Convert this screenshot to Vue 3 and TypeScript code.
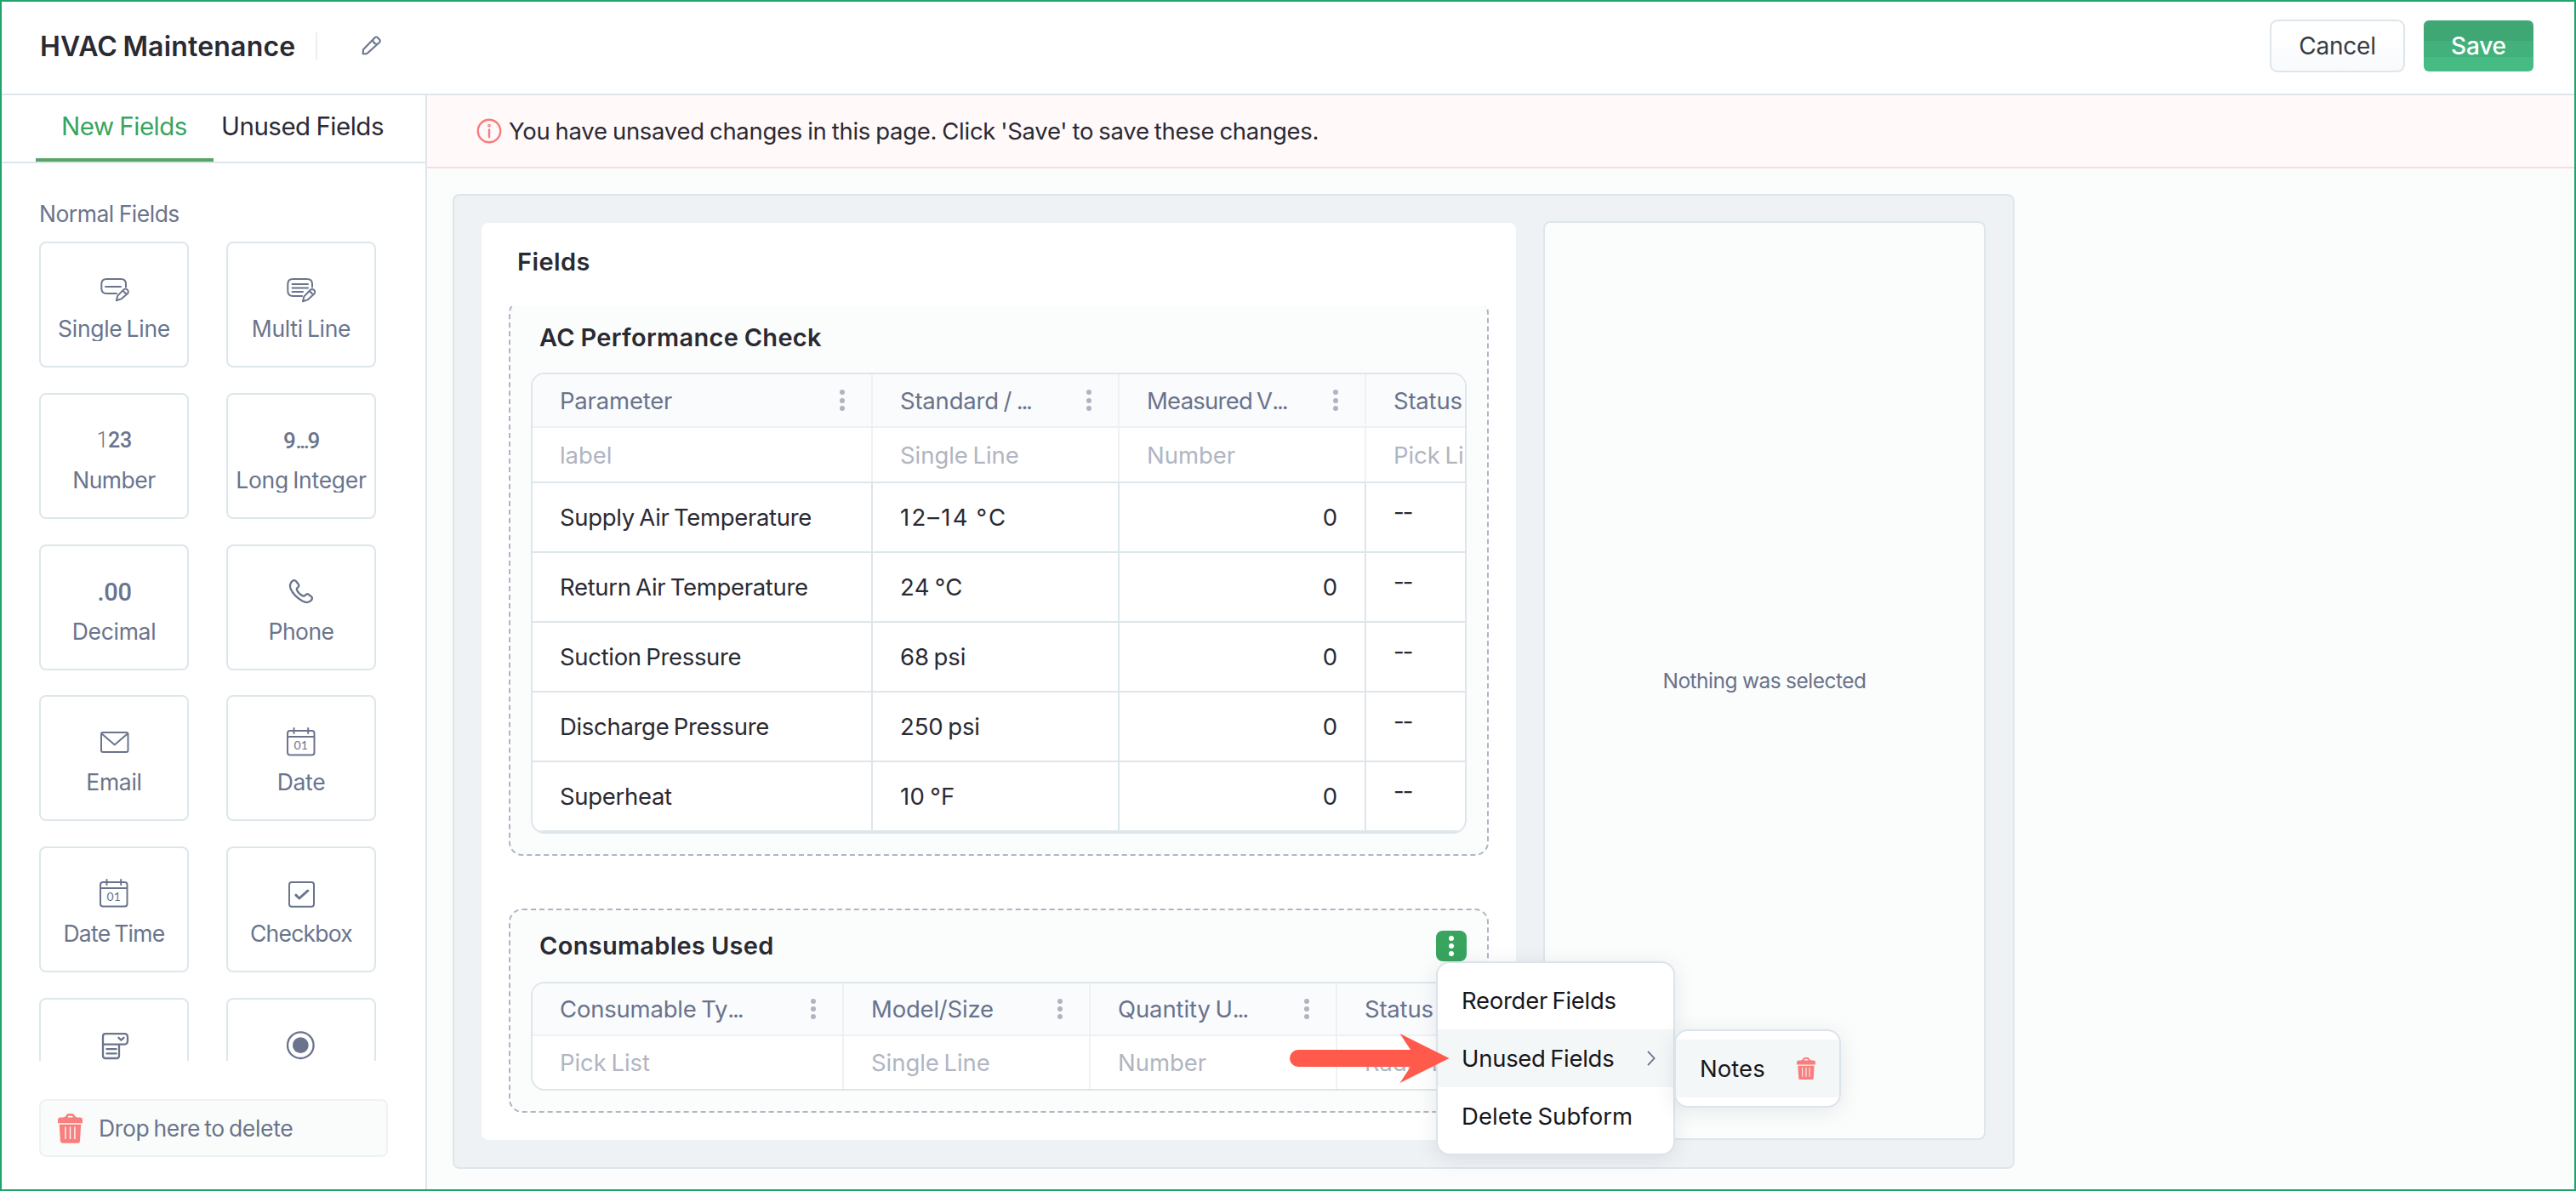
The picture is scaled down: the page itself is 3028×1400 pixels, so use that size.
<script setup lang="ts">
interface FieldType {
  label: string
  icon: string
  tracking?: number
}
interface Column {
  title: string
  cut?: boolean
  type: string
  width: number
  tracking?: number
}

const fieldTypes: FieldType[] = [
  { label: 'Single Line', icon: 'single' },
  { label: 'Multi Line', icon: 'multi' },
  { label: 'Number', icon: 'number', tracking: -0.5 },
  { label: 'Long Integer', icon: 'long', tracking: -0.25 },
  { label: 'Decimal', icon: 'decimal' },
  { label: 'Phone', icon: 'phone', tracking: -0.5 },
  { label: 'Email', icon: 'email' },
  { label: 'Date', icon: 'date' },
  { label: 'Date Time', icon: 'date', tracking: -0.7 },
  { label: 'Checkbox', icon: 'checkbox', tracking: -0.75 },
  { label: 'Pick List', icon: 'picklist' },
  { label: 'Radio Button', icon: 'radio' },
]

const performanceColumns: Column[] = [
  { title: 'Parameter', type: 'label', width: 400 },
  { title: 'Standard / ', cut: true, type: 'Single Line', width: 290 },
  { title: 'Measured V', cut: true, type: 'Number', width: 290, tracking: -0.75 },
  { title: 'Status', type: 'Pick List', width: 290 },
]
const performanceRows = [
  { name: 'Supply Air Temperature', standard: '12–14 °C', tracking: 2.2 },
  { name: 'Return Air Temperature', standard: '24 °C', tracking: 0.3 },
  { name: 'Suction Pressure', standard: '68 psi', tracking: -0.1 },
  { name: 'Discharge Pressure', standard: '250 psi', tracking: -0.1 },
  { name: 'Superheat', standard: '10 °F', tracking: 0.3 },
]
const consumableColumns: Column[] = [
  { title: 'Consumable Ty', cut: true, type: 'Pick List', width: 366 },
  { title: 'Model/Size', type: 'Single Line', width: 290 },
  { title: 'Quantity U', cut: true, type: 'Number', width: 290, tracking: -0.1 },
  { title: 'Status', type: 'Radio Button', width: 290 },
]
</script>

<template>
  <div class="app">
    <header class="topbar">
      <h1>HVAC Maintenance</h1>
      <span class="divider"></span>
      <svg class="edit" viewBox="0 0 26 26" width="26" height="26">
        <path d="M2.6 22.2 L3 17.2 L16.6 3.2 a2.3 2.3 0 0 1 3.3 0 l2.2 2.2 a2.3 2.3 0 0 1 0 3.3 L8.2 21.2 q-.8.8-2 .9Z M14.2 5.8 q.4 4.4 5.2 5.2" />
      </svg>
      <div class="actions">
        <button class="btn cancel">Cancel</button>
        <button class="btn save">Save</button>
      </div>
    </header>

    <div class="body">
      <aside class="sidebar">
        <nav class="tabs">
          <a class="tab active">New Fields</a>
          <a class="tab">Unused Fields</a>
        </nav>
        <div class="palette">
          <div class="palette-title">Normal Fields</div>
          <div class="cards">
            <div v-for="f in fieldTypes" :key="f.label" class="card">
              <svg class="icon" viewBox="0 0 40 40" width="40" height="40">
                <g v-if="f.icon === 'single'">
                  <path d="M34 17.5V14q0-6-6-6H11.3q-6 0-6 6v5q0 6 6 6H23M10 17H28" />
                  <path d="M22.9 33.3L24.2 27.6L31.2 20.6a3.2 3.2 0 0 1 4.6 4.6L28.4 31.4ZM30.4 21.6l4 4.2" />
                </g>
                <g v-else-if="f.icon === 'multi'">
                  <path d="M33 17.5V14q0-6-6-6H10.3q-6 0-6 6v8q0 6 6 6H21M9.5 14H28M9.5 18.5H28M9.5 23H22" />
                  <path d="M22 34.3L23.3 28.6L30.6 21a3.2 3.2 0 0 1 4.6 4.6L27.6 32.4ZM29.8 22l4 4.2" />
                </g>
                <text v-else-if="f.icon === 'number'" x="-0.5" y="27.7" class="digits"><tspan class="thin">1</tspan>23</text>
                <text v-else-if="f.icon === 'long'" x="-1" y="29.4" class="digits tight">9<tspan class="ell">...</tspan>9</text>
                <text v-else-if="f.icon === 'decimal'" x="0.5" y="29.8" class="digits dec">.00</text>
                <path
                  v-else-if="f.icon === 'phone'"
                  d="M9.5 7.2C11 5.6 12.8 5.8 14 7.2L16.8 10.8C17.8 12.2 17.4 13.6 16.2 14.4C14.8 15.4 14.4 16.4 15 17.8C16.4 20.6 19 23.2 21.8 24.4C23.2 25 24 24.8 25 23.6C26.2 22 27.6 22 28.8 22.8L31.8 25.2C33.2 26.4 33.2 28 32 29.6C29.2 33 25.6 32.8 21 30.2C14.6 26.4 10 21.6 7.6 16C6.2 12.4 7 9.6 9.5 7.2Z"
                  class="bold"
                />
                <path v-else-if="f.icon === 'email'" d="M7 8H34.5q2 0 2 2V29q0 2-2 2H7q-2 0-2-2V10q0-2 2-2ZM5.6 9.4L20.7 22.5L35.8 9.4" />
                <g v-else-if="f.icon === 'date'">
                  <path d="M7 6H32.5q3 0 3 3V31.5q0 3-3 3H7q-3 0-3-3V9q0-3 3-3ZM4 13H35.5M11.5 3V9M28.2 3V9" />
                  <text x="11.6" y="27.8" class="day">01</text>
                </g>
                <g v-else-if="f.icon === 'checkbox'">
                  <path d="M9 6H32q3 0 3 3V31.8q0 3-3 3H9q-3 0-3-3V9q0-3 3-3Z" />
                  <path d="M13.8 21.2L17.8 25L27.8 16" class="heavy" />
                </g>
                <g v-else-if="f.icon === 'picklist'">
                  <path d="M10 6.2H32q4 0 4 4v4.4q0 4-4 4H7M7 18.6V9.2q0-3 3-3M7 18.6V32q0 3 3 3H23q3 0 3-3V18.8M11.4 24.2H22.6M11.4 29.4H22.6" class="bold" />
                  <path d="M25.4 10.8L28.4 13.6L31.4 10.8" class="bold" />
                </g>
                <g v-else>
                  <circle cx="19.3" cy="19.7" r="15.3" class="bold" />
                  <circle cx="19.3" cy="19.7" r="9.4" class="solid" />
                </g>
              </svg>
              <span class="card-label" :style="{ letterSpacing: (f.tracking ?? -0.3) + 'px' }">{{ f.label }}</span>
            </div>
          </div>
        </div>
        <div class="dropzone">
          <svg class="trash" viewBox="0 0 29 35" width="29" height="35">
            <path d="M0 11.2V7.6q0-3 3-3H6q2.5 0 3.3-1.8 .8-2.8 3-2.8H17q2 0 3 2.8 .8 1.8 3 1.8h3q3 0 3 3v3.6ZM12 4.6H17.5V2.8H12Z" />
            <path d="M1.7 12.8H27.2L26 32.4q-.2 2.4-2.6 2.4H5.6q-2.4 0-2.6-2.4ZM8.2 15.6V30H9.6V15.6ZM13.8 15.6V30H15.2V15.6ZM19.2 15.6V30H20.6V15.6Z" />
          </svg>
          <span>Drop here to delete</span>
        </div>
      </aside>

      <main class="main">
        <div class="notice">
          <svg viewBox="0 0 30 30" width="30" height="30">
            <circle cx="15" cy="15" r="13.2" />
            <path d="M15 13.4V22" />
            <circle cx="15" cy="8.6" r="0.7" />
          </svg>
          <span>You have unsaved changes in this page. Click 'Save' to save these changes.</span>
        </div>

        <div class="canvas">
          <section class="panel">
            <h2>Fields</h2>
            <div class="scroller">
              <div class="subform">
                <div class="subform-head"><h3>AC Performance Check</h3></div>
                <div class="grid ruled">
                  <div class="row head">
                    <div v-for="c in performanceColumns" :key="c.title" class="cell" :style="{ width: c.width + 'px' }">
                      <span :style="{ letterSpacing: (c.tracking ?? -0.2) + 'px' }">{{ c.title }}<i v-if="c.cut" class="ellipsis">...</i></span>
                      <span v-if="c.title !== 'Status'" class="dots"><b></b><b></b><b></b></span>
                    </div>
                  </div>
                  <div class="row kinds">
                    <div v-for="c in performanceColumns" :key="c.title" class="cell" :style="{ width: c.width + 'px' }">{{ c.type }}</div>
                  </div>
                  <div v-for="r in performanceRows" :key="r.name" class="row data">
                    <div class="cell first">{{ r.name }}</div>
                    <div class="cell" :style="{ letterSpacing: r.tracking + 'px' }">{{ r.standard }}</div>
                    <div class="cell amount">0</div>
                    <div class="cell blank">--</div>
                  </div>
                </div>
              </div>
            </div>

            <div class="subform second">
              <div class="subform-head">
                <h3 class="wide">Consumables Used</h3>
                <div class="menu-anchor">
                  <button class="more"><b></b><b></b><b></b></button>
                  <div class="menu">
                    <div class="menu-item">Reorder Fields</div>
                    <div class="menu-item current">
                      Unused Fields
                      <svg viewBox="0 0 12 20" width="12" height="20"><path d="M2 1.8L9.6 10L2 18.2" /></svg>
                    </div>
                    <div class="menu-item plain">Delete Subform</div>
                    <div class="submenu">
                      <div class="menu-item current plain">
                        Notes
                        <svg class="trash" viewBox="0 0 29 35" width="22" height="26.5">
                          <path d="M0 11.2V7.6q0-3 3-3H6q2.5 0 3.3-1.8 .8-2.8 3-2.8H17q2 0 3 2.8 .8 1.8 3 1.8h3q3 0 3 3v3.6ZM12 4.6H17.5V2.8H12Z" />
                          <path d="M1.7 12.8H27.2L26 32.4q-.2 2.4-2.6 2.4H5.6q-2.4 0-2.6-2.4ZM8.2 15.6V30H9.6V15.6ZM13.8 15.6V30H15.2V15.6ZM19.2 15.6V30H20.6V15.6Z" />
                        </svg>
                      </div>
                    </div>
                    <svg class="arrow" viewBox="0 0 188 58" width="188" height="58">
                      <path d="M10 19H142L129.5 0L187.5 29L129.5 58L142 39H10A10 10 0 0 1 10 19Z" />
                    </svg>
                  </div>
                </div>
              </div>
              <div class="grid">
                <div class="row head">
                  <div v-for="c in consumableColumns" :key="c.title" class="cell" :style="{ width: c.width + 'px' }">
                    <span :style="{ letterSpacing: (c.tracking ?? -0.2) + 'px' }">{{ c.title }}<i v-if="c.cut" class="ellipsis">...</i></span>
                    <span v-if="c.title !== 'Status'" class="dots"><b></b><b></b><b></b></span>
                  </div>
                </div>
                <div class="row kinds">
                  <div v-for="c in consumableColumns" :key="c.title" class="cell" :style="{ width: c.width + 'px' }">{{ c.type }}</div>
                </div>
              </div>
            </div>
          </section>
          <section class="inspector">Nothing was selected</section>
        </div>
      </main>
    </div>
  </div>
</template>

<style>
body {
  margin: 0;
}
</style>

<style scoped>
* {
  box-sizing: border-box;
}
.app {
  display: flex;
  flex-direction: column;
  width: 3028px;
  height: 1400px;
  border: 2px solid #20a46c;
  background: #fff;
  color: #2a2a33;
  font-family: Inter, 'Liberation Sans', sans-serif;
  font-size: 27.5px;
  letter-spacing: -0.2px;
  word-spacing: -2px;
  overflow: hidden;
}
h1,
h2,
h3 {
  margin: 0;
  font-weight: 600;
}
.topbar {
  display: flex;
  align-items: center;
  flex: none;
  height: 110px;
  padding: 0 48px 4px 45px;
  border-bottom: 2px solid #dee6eb;
}
h1 {
  width: 324px;
  font-size: 32px;
  letter-spacing: 0.2px;
  white-space: nowrap;
}
.divider {
  width: 2px;
  height: 32px;
  background: #eaeff3;
}
.edit {
  margin-left: 51px;
  fill: none;
  stroke: #6b7590;
  stroke-width: 2.1;
  stroke-linejoin: round;
}
.actions {
  display: flex;
  align-items: center;
  gap: 22px;
  margin-left: auto;
}
.btn {
  padding: 0;
  border: 0;
  font: 400 28px Inter, 'Liberation Sans', sans-serif;
  border-radius: 6px;
}
.cancel {
  width: 159px;
  height: 62px;
  border: 2px solid #dee6eb;
  border-radius: 9px;
  background: linear-gradient(#fff 25%, #f8fafc);
  color: #3a3a42;
  letter-spacing: -0.2px;
}
.save {
  width: 129px;
  height: 60px;
  background: linear-gradient(#3fa774 24px, #43b17b 24px 43px, #46bb83 43px);
  color: #fff;
  font-weight: 500;
  letter-spacing: -0.2px;
}
.body {
  display: flex;
  flex: 1;
  min-height: 0;
}
.sidebar {
  display: flex;
  flex-direction: column;
  flex: none;
  width: 500px;
  border-right: 2px solid #dee6eb;
}
.tabs {
  display: flex;
  flex: none;
  height: 80px;
  padding-left: 40px;
  border-bottom: 2px solid #dee6eb;
  word-spacing: -1px;
}
.tab {
  padding: 0 9px 0 9px;
  height: 78px;
  line-height: 72px;
  font-size: 29.5px;
  letter-spacing: -0.5px;
  white-space: nowrap;
}
.tab.active {
  width: 209px;
  padding: 0 0 0 30px;
  border-bottom: 4px solid #57a566;
  color: #38a45e;
}
.palette {
  flex: none;
  height: 1055px;
  padding: 40px 0 0 44px;
  overflow: hidden;
}
.palette-title {
  height: 52px;
  line-height: 39px;
  font-size: 26.5px;
  letter-spacing: -0.5px;
  word-spacing: -1px;
  color: #6a748c;
}
.cards {
  display: grid;
  grid-template-columns: 176px 176px;
  column-gap: 44px;
  row-gap: 29.8px;
}
.card {
  display: flex;
  flex-direction: column;
  align-items: center;
  height: 148px;
  padding-top: 34px;
  border: 2px solid #dde7eb;
  border-radius: 8px;
  color: #6a748c;
  font-size: 26.5px;
}
.icon {
  display: block;
  flex: none;
  margin-bottom: 12px;
  fill: none;
  stroke: #6a748c;
  stroke-width: 2;
  stroke-linejoin: round;
  stroke-linecap: round;
  overflow: visible;
}
.icon .bold {
  stroke-width: 2.3;
}
.icon .heavy {
  stroke-width: 3;
}
.icon .solid,
.icon text {
  fill: #6a748c;
  stroke: none;
}
.icon text {
  word-spacing: 0;
}
.digits {
  font-size: 25px;
  font-weight: 500;
  font-family: Roboto, sans-serif;
  letter-spacing: -0.3px;
}
.digits .thin {
  font-weight: 300;
}
.digits.tight {
  letter-spacing: -0.4px;
  font-size: 26px;
}
.digits .ell {
  letter-spacing: -2.5px;
}
.digits.dec {
  font-size: 29px;
  font-weight: 500;
}
.day {
  font-family: Lato, sans-serif;
  font-weight: 400;
  font-size: 14px;
  letter-spacing: 0;
}
.card-label {
  height: 29px;
  line-height: 29px;
  overflow: hidden;
  white-space: nowrap;
}
.dropzone {
  display: flex;
  align-items: center;
  width: 410px;
  height: 68px;
  margin: 45px 0 0 44px;
  padding-left: 20px;
  border: 2px solid #eef2f5;
  border-radius: 8px;
  background: #fafcfb;
  color: #6a748c;
  font-size: 26.5px;
  letter-spacing: -0.35px;
}
.dropzone span {
  margin: -1px 0 0 19px;
}
.trash {
  fill: #f97f7e;
  fill-rule: evenodd;
}
.main {
  flex: 1;
  min-width: 0;
  background: #fbfdfc;
}
.notice {
  display: flex;
  align-items: center;
  height: 86px;
  padding-left: 58px;
  border-bottom: 2px solid #fadcdf;
  background: #fff9f9;
  letter-spacing: -0.28px;
  word-spacing: -1.3px;
}
.notice svg {
  margin-right: 8px;
  fill: none;
  stroke: #f97b7c;
  stroke-width: 2.4;
  stroke-linecap: round;
}
.canvas {
  display: flex;
  gap: 32px;
  width: 1836px;
  height: 1146px;
  margin: 30px 0 0 30px;
  padding: 30px 32px 32px;
  border: 2px solid #dde6eb;
  border-radius: 8px;
  background: #eef2f5;
}
.panel {
  width: 1216px;
  height: 1078px;
  margin-top: 2px;
  padding: 0 32px;
  border-radius: 8px;
  background: #fff;
}
h2 {
  height: 98px;
  padding-left: 10px;
  line-height: 92px;
  font-size: 29px;
  letter-spacing: 0.4px;
}
.scroller {
  height: 646px;
  overflow: hidden;
}
.scroller .subform {
  margin-top: -8px;
}
.subform {
  width: 1152px;
  padding: 0 24px 24px;
  border: 2px dashed #afb5c3;
  border-radius: 16px;
  background: #fbfdfc;
}
.second {
  margin-top: 62px;
}
.subform-head {
  display: flex;
  justify-content: space-between;
  align-items: center;
  height: 84px;
}
h3 {
  padding-left: 10px;
  font-size: 29px;
  letter-spacing: 0.3px;
  word-spacing: -1px;
}
h3.wide {
  margin-top: -2px;
  letter-spacing: 0.3px;
}
.grid {
  border: 2px solid #dde6eb;
  border-radius: 16px;
  background: #fff;
  overflow: hidden;
}
.row {
  display: flex;
}
.cell {
  display: flex;
  align-items: center;
  justify-content: space-between;
  flex: none;
  width: 290px;
  padding: 0 33px 0 32px;
  border-right: 2px solid #eef2f5;
  white-space: nowrap;
}
.head {
  height: 62px;
  border-bottom: 2px solid #eef1f4;
  background: #fafbfd;
  color: #69738b;
}
.kinds {
  height: 62px;
  color: #b0b5c2;
  letter-spacing: -0.05px;
}
.ruled .head {
  height: 63px;
}
.ruled .kinds {
  height: 65px;
  border-bottom: 2px solid #dde6eb;
}
.data {
  height: 82px;
  border-bottom: 2px solid #dde6eb;
}
.data .cell {
  border-right-color: #dde6eb;
}
.data .cell.first {
  width: 400px;
  letter-spacing: -0.32px;
}
.cell.amount {
  justify-content: flex-end;
  padding-right: 32px;
}
.data .cell.blank {
  padding-bottom: 13px;
  letter-spacing: -2px;
}
.ellipsis {
  font-style: normal;
  letter-spacing: -2.2px;
}
.dots {
  display: flex;
  flex-direction: column;
  gap: 3.2px;
  margin-right: -2px;
}
.dots b {
  width: 6px;
  height: 6px;
  border-radius: 50%;
  background: #afb4c1;
}
.menu-anchor {
  position: relative;
}
.more {
  display: flex;
  flex-direction: column;
  align-items: center;
  justify-content: center;
  gap: 3.2px;
  width: 36px;
  height: 36px;
  padding: 0;
  border: 0;
  border-radius: 8px;
  background: #38a45e;
}
.more b {
  width: 6px;
  height: 6px;
  border-radius: 50%;
  background: #fff;
}
.menu {
  position: absolute;
  z-index: 2;
  top: 36px;
  left: 0;
  width: 281px;
  height: 228px;
  padding: 10px 0;
  border: 2px solid #dbe4ea;
  border-radius: 16px;
  background: #fff;
  box-shadow: 0 4px 24px rgba(40, 50, 70, 0.1);
  color: #17171b;
  letter-spacing: -0.28px;
}
.menu-item {
  display: flex;
  align-items: center;
  justify-content: space-between;
  height: 68px;
  padding: 0 20px 0 28px;
  white-space: nowrap;
}
.menu-item.plain {
  letter-spacing: 0.05px;
}
.menu-item.current {
  background: #f4f7f8;
}
.menu-item svg {
  fill: none;
  stroke: #6a738a;
  stroke-width: 1.8;
}
.submenu {
  position: absolute;
  top: 78px;
  left: 278px;
  width: 196px;
  height: 92px;
  padding: 10px 0;
  border: 2px solid #dbe4ea;
  border-radius: 16px;
  background: #fff;
  box-shadow: 0 4px 24px rgba(40, 50, 70, 0.1);
}
.submenu .menu-item {
  padding: 0 28px 0 28px;
}
.submenu .trash {
  fill: #f97f7e;
  stroke: none;
}
.arrow {
  position: absolute;
  top: 83px;
  left: -174px;
  fill: #ff5a4b;
}
.inspector {
  display: flex;
  align-items: center;
  justify-content: center;
  width: 520px;
  height: 1080px;
  padding-bottom: 1px;
  border: 2px solid #dde6eb;
  border-radius: 8px;
  background: #fbfdfc;
  color: #69738b;
  font-size: 24.5px;
  letter-spacing: -0.5px;
  word-spacing: -0.5px;
}
</style>
